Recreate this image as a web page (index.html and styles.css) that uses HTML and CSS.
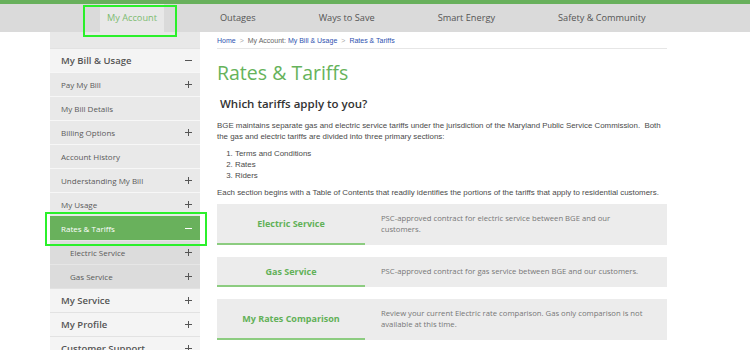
FILE: index.html
```html
<!doctype html>
<html lang="en">
<head>
  <meta charset="utf-8">
  <title>Rates &amp; Tariffs</title>
  <link rel="stylesheet" href="styles.css">
</head>
<body>
<div class="topBar"></div>
<nav class="mainNav">
  <ul class="mainNav__list">
    <li class="mainNav__item mainNav__item--active">My Account</li>
    <li class="mainNav__item">Outages</li>
    <li class="mainNav__item">Ways to Save</li>
    <li class="mainNav__item">Smart Energy</li>
    <li class="mainNav__item">Safety &amp; Community</li>
  </ul>
</nav>

<div class="pageContainer">
  <aside class="sideNav">
    <div class="sideNav__row sideNav__row--top">My Bill &amp; Usage<span class="toggle toggle--minus"></span></div>
    <div class="sideNav__row">Pay My Bill<span class="toggle toggle--plus"></span></div>
    <div class="sideNav__row">My Bill Details</div>
    <div class="sideNav__row">Billing Options<span class="toggle toggle--plus"></span></div>
    <div class="sideNav__row">Account History</div>
    <div class="sideNav__row">Understanding My Bill<span class="toggle toggle--plus"></span></div>
    <div class="sideNav__row">My Usage<span class="toggle toggle--plus"></span></div>
    <div class="sideNav__row sideNav__row--active">Rates &amp; Tariffs<span class="toggle toggle--minus"></span></div>
    <div class="sideNav__row sideNav__row--sub">Electric Service<span class="toggle toggle--plus"></span></div>
    <div class="sideNav__row sideNav__row--sub">Gas Service<span class="toggle toggle--plus"></span></div>
    <div class="sideNav__row sideNav__row--top">My Service<span class="toggle toggle--plus"></span></div>
    <div class="sideNav__row sideNav__row--top">My Profile<span class="toggle toggle--plus"></span></div>
    <div class="sideNav__row sideNav__row--top">Customer Support<span class="toggle toggle--plus"></span></div>
  </aside>

  <main class="content">
    <div class="breadcrumb">
      <a href="#">Home</a><span class="breadcrumb__sep">&gt;</span><span class="breadcrumb__label">My Account:</span>
      <a href="#">My Bill &amp; Usage</a><span class="breadcrumb__sep">&gt;</span><a href="#">Rates &amp; Tariffs</a>
    </div>

    <h1>Rates &amp; Tariffs</h1>
    <h2>Which tariffs apply to you?</h2>

    <div class="copy">
      <p>BGE maintains separate gas and electric service tariffs under the jurisdiction of the Maryland Public Service Commission.&nbsp; Both the gas and electric tariffs are divided into three primary sections:</p>
      <ol>
        <li>Terms and Conditions</li>
        <li>Rates</li>
        <li>Riders</li>
      </ol>
      <p>Each section begins with a Table of Contents that readily identifies the portions of the tariffs that apply to residential customers.</p>
    </div>

    <div class="tariffCard">
      <div class="tariffCard__title">Electric Service</div>
      <div class="tariffCard__text">PSC-approved contract for electric service between BGE and our customers.</div>
    </div>
    <div class="tariffCard">
      <div class="tariffCard__title">Gas Service</div>
      <div class="tariffCard__text">PSC-approved contract for gas service between BGE and our customers.</div>
    </div>
    <div class="tariffCard">
      <div class="tariffCard__title">My Rates Comparison</div>
      <div class="tariffCard__text">Review your current Electric rate comparison. Gas only comparison is not available at this time.</div>
    </div>
  </main>
</div>

<div class="callout callout--nav"></div>
<div class="callout callout--side"></div>
</body>
</html>
```

FILE: styles.css
```css
body {
  margin: 0;
  font-family: "Open Sans", "Liberation Sans", Arial, sans-serif;
  color: #555;
  background: #fff;
  overflow: hidden;
}

a {
  color: #2f52b0;
  text-decoration: none;
}

.topBar {
  height: 4px;
  background-color: #68b05c;
}

/* main navigation */
.mainNav {
  height: 28px;
  background-color: #dadada;
}

.mainNav__list {
  display: flex;
  gap: 49px;
  margin: 0;
  padding: 0 0 0 100px;
  list-style: none;
}

.mainNav__item {
  padding: 0 7px;
  font-size: 9.2px;
  line-height: 28px;
  color: #555;
}

.mainNav__item--active {
  background-color: #e8e8e8;
  color: #7dbb70;
}

.pageContainer {
  display: flex;
  padding-left: 50px;
}

/* side navigation */
.sideNav {
  width: 150px;
  padding-top: 16px;
  background-color: #e8e8e8;
}

.sideNav__row {
  display: flex;
  align-items: center;
  justify-content: space-between;
  box-sizing: border-box;
  height: 24px;
  padding: 0 8px 1px 11px;
  border-top: 1px solid #f7f7f7;
  font-size: 8px;
  color: #5a5a5a;
  background-color: #e9e9e9;
}

.sideNav__row--top {
  font-size: 9.5px;
  font-weight: 600;
  color: #555;
  background-color: #f4f4f4;
  border-top-color: #e2e2e2;
}

.sideNav__row--active {
  background-color: #69b15c;
  color: #fff;
  border-top-color: #69b15c;
}

.sideNav__row--sub {
  padding-left: 20px;
  background-color: #dcdcdc;
  border-top-color: #e6e6e6;
}

.toggle {
  position: relative;
  width: 7px;
  height: 7px;
}

.toggle::before,
.toggle--plus::after {
  content: "";
  position: absolute;
  background-color: #555;
}

.toggle::before {
  left: 0;
  top: 3px;
  width: 7px;
  height: 1px;
}

.toggle--plus::after {
  left: 3px;
  top: 0;
  width: 1px;
  height: 7px;
}

.sideNav__row--active .toggle::before {
  background-color: #fff;
}

/* content */
.content {
  width: 450px;
  margin-left: 17px;
}

.breadcrumb {
  padding: 4px 0 3px;
  border-bottom: 1px solid #e6e6e6;
  font-family: "Liberation Sans", Arial, sans-serif;
  font-size: 7px;
  line-height: 9px;
}

.breadcrumb__sep {
  margin: 0 4px;
  color: #aaa;
}

.breadcrumb__label {
  color: #666;
}

h1 {
  margin: 12px 0 0;
  font-size: 19.5px;
  line-height: 24px;
  font-weight: 400;
  color: #66b35b;
}

h2 {
  margin: 12px 0 0;
  padding-left: 3px;
  font-size: 11.5px;
  line-height: 14px;
  font-weight: 600;
  color: #333;
}

.copy {
  margin-top: 9px;
  font-family: "Liberation Sans", Arial, sans-serif;
  font-size: 7.9px;
  line-height: 11px;
  color: #4a4a4a;
}

.copy p {
  margin: 0;
}

.copy ol {
  margin: 6px 0;
  padding-left: 18px;
}

.tariffCard {
  display: flex;
  margin-top: 6px;
  margin-bottom: 12px;
  background-color: #ececec;
}

.tariffCard + .tariffCard {
  margin-top: 0;
}

.tariffCard__title {
  flex: 0 0 148px;
  display: flex;
  align-items: center;
  justify-content: center;
  border-bottom: 2px solid #8ccc80;
  font-size: 9px;
  font-weight: 700;
  color: #62b158;
}

.tariffCard__text {
  flex: 1;
  padding: 9px 20px 10px 16px;
  font-size: 7.7px;
  line-height: 11px;
  color: #777;
}

/* highlight boxes */
.callout {
  position: absolute;
  border: 2px solid #2bf02b;
}

.callout--nav {
  left: 83px;
  top: 5px;
  width: 90px;
  height: 28px;
}

.callout--side {
  left: 45px;
  top: 212px;
  width: 158px;
  height: 30px;
}
```
